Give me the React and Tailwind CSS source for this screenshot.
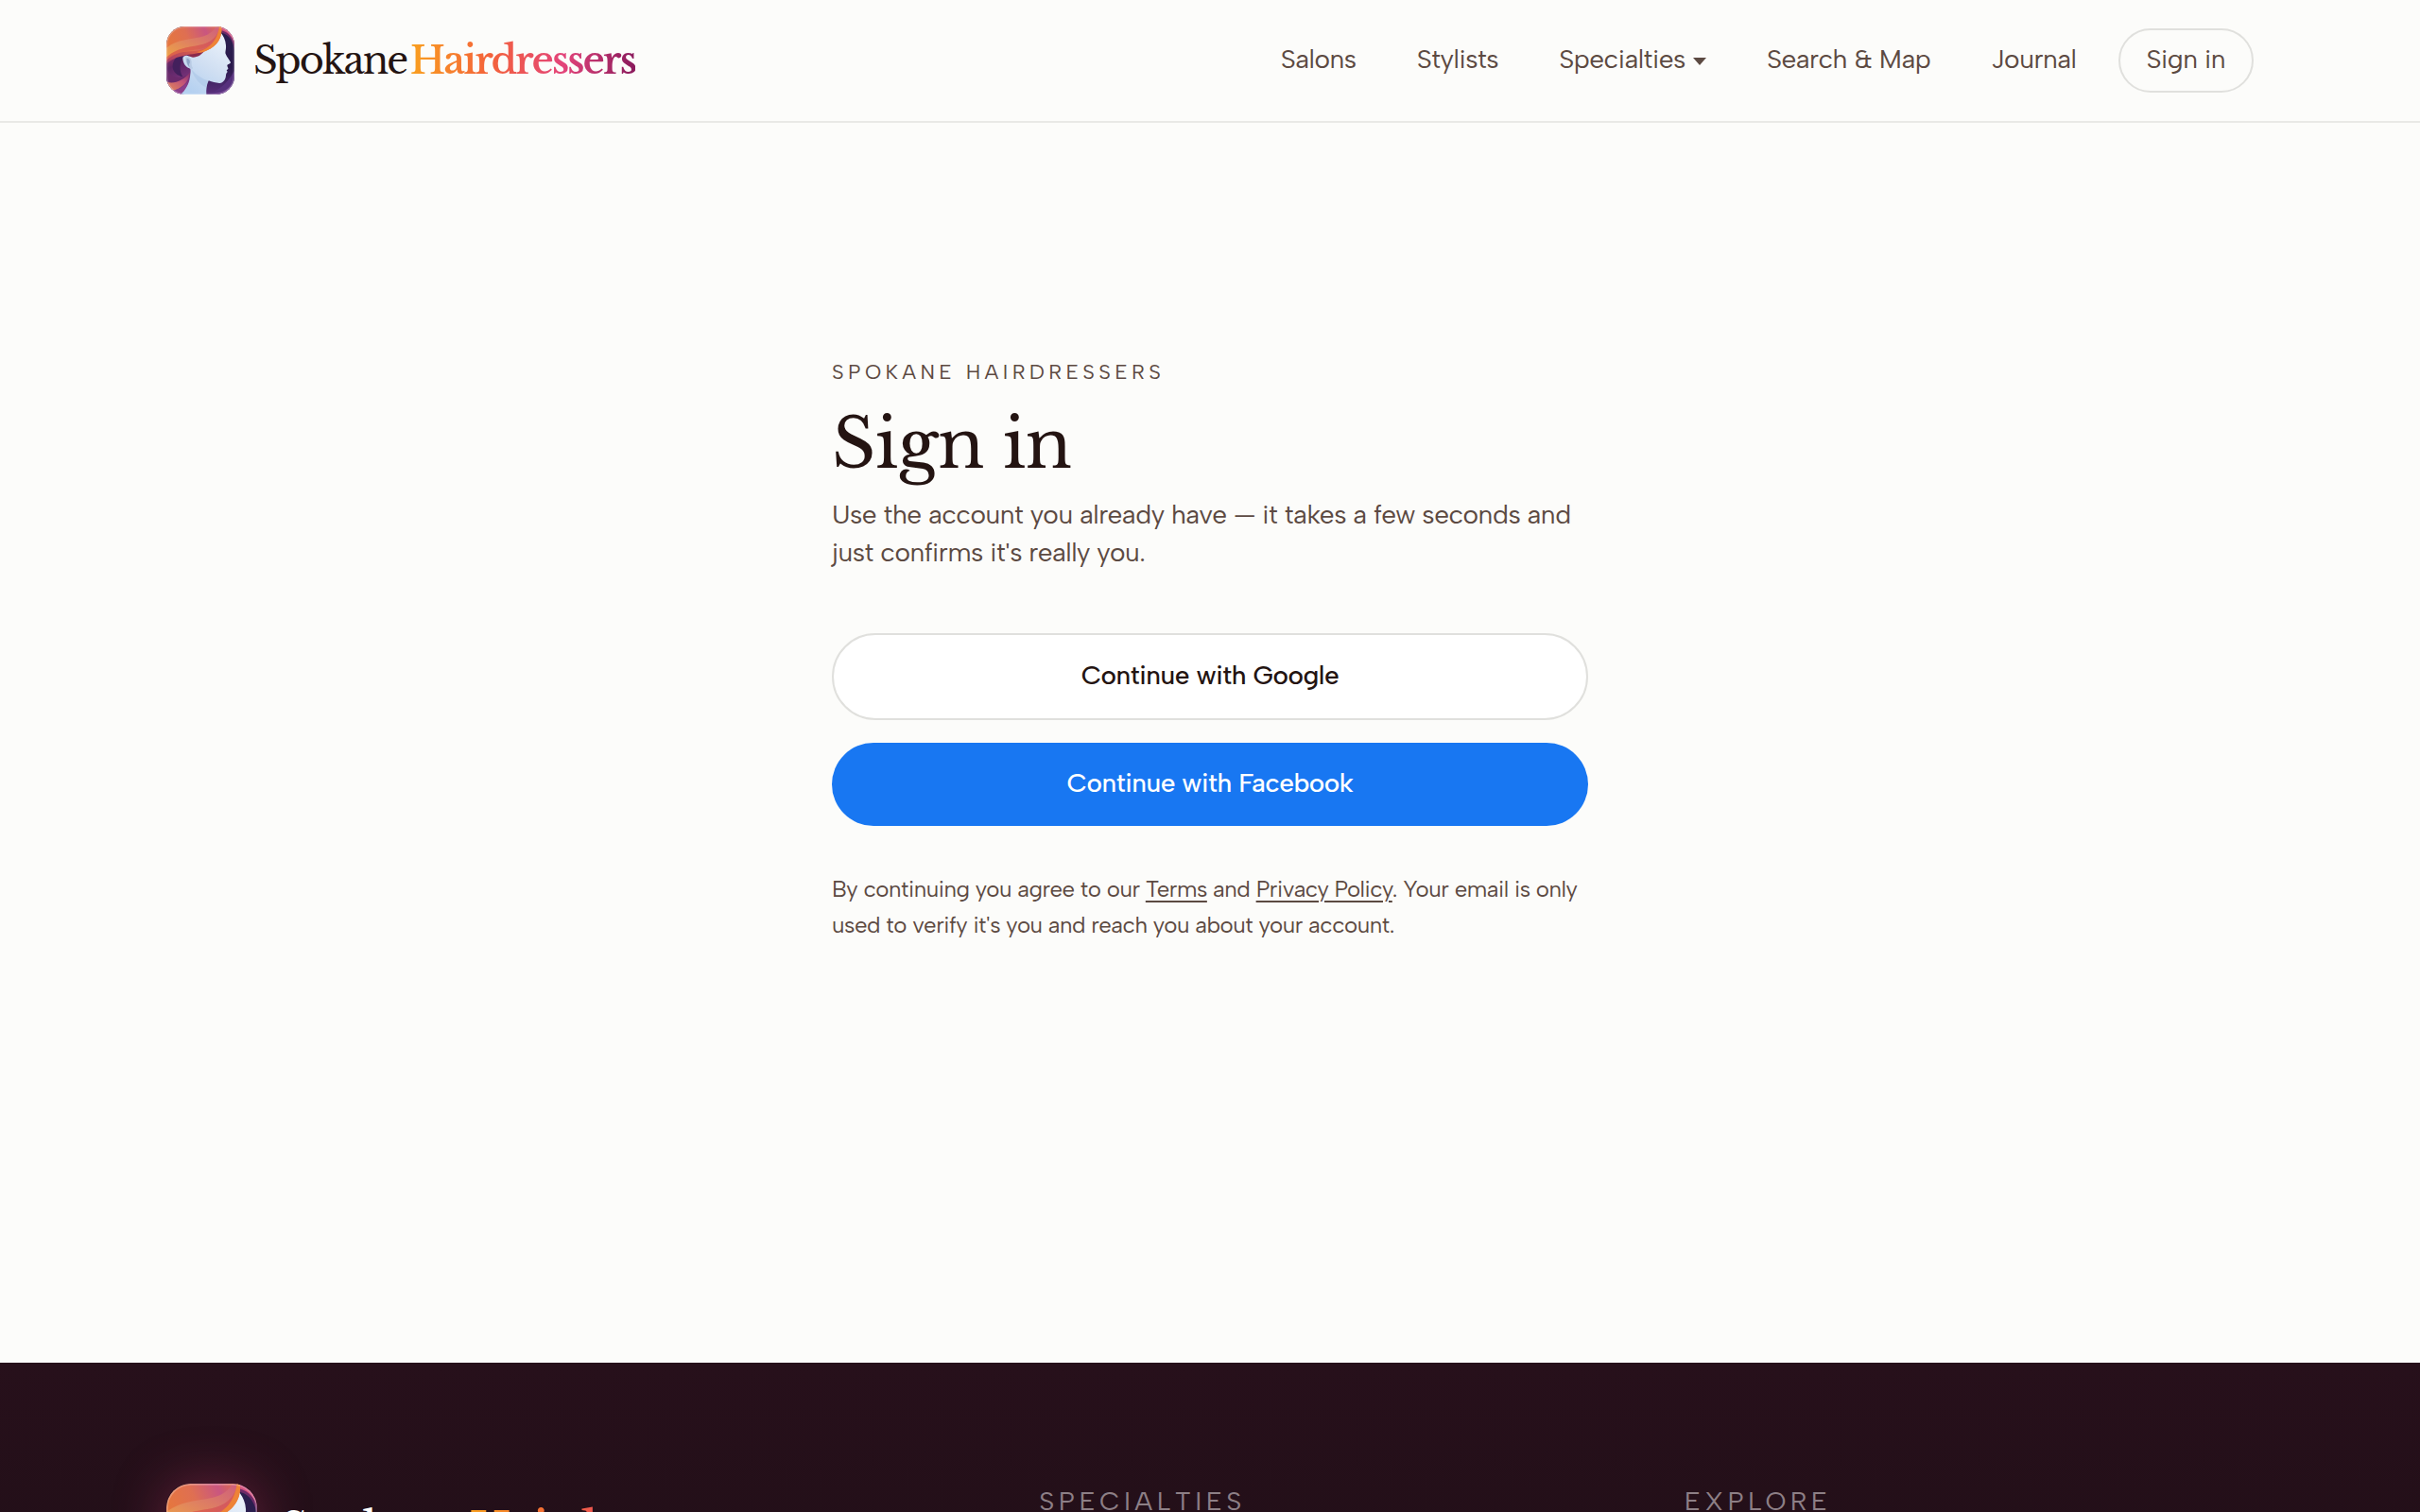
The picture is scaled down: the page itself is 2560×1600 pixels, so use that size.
import React, { useId } from "react";
import clsx from "clsx";

const navLinks = [
  { label: "Salons", href: "#salons" },
  { label: "Stylists", href: "#stylists" },
  { label: "Specialties", href: "#specialties", menu: true },
  { label: "Search & Map", href: "#search" },
  { label: "Journal", href: "#journal" },
];

function LogoMark({ className }) {
  const id = useId().replace(/[^a-zA-Z0-9]/g, "");
  const url = (name) => `url(#${name}${id})`;

  return (
    <svg viewBox="0 0 216 216" className={className} aria-hidden="true">
      <defs>
        <clipPath id={`clip${id}`}>
          <rect width="216" height="216" rx="58" />
        </clipPath>
        <linearGradient id={`bg${id}`} x1="0" y1="0" x2="0" y2="1">
          <stop offset="0" stopColor="#2a2150" />
          <stop offset="0.6" stopColor="#2b1a4c" />
          <stop offset="1" stopColor="#5a2f7c" />
        </linearGradient>
        <linearGradient id={`hair${id}`} x1="0" y1="0.3" x2="1" y2="0">
          <stop offset="0" stopColor="#e5763f" />
          <stop offset="0.35" stopColor="#df6f52" />
          <stop offset="0.7" stopColor="#c95680" />
          <stop offset="1" stopColor="#e0703f" />
        </linearGradient>
        <linearGradient id={`band${id}`} x1="0" y1="1" x2="1" y2="0">
          <stop offset="0" stopColor="#eda345" />
          <stop offset="0.45" stopColor="#e0835f" />
          <stop offset="1" stopColor="#cf5f7c" />
        </linearGradient>
        <linearGradient id={`front${id}`} x1="0" y1="1" x2="1" y2="0">
          <stop offset="0" stopColor="#a53a68" />
          <stop offset="0.5" stopColor="#dd6048" />
          <stop offset="1" stopColor="#f08a35" />
        </linearGradient>
        <linearGradient id={`back${id}`} x1="0" y1="0" x2="0.3" y2="1">
          <stop offset="0" stopColor="#a33567" />
          <stop offset="0.4" stopColor="#5a2465" />
          <stop offset="1" stopColor="#8a3c86" />
        </linearGradient>
        <linearGradient id={`lock${id}`} x1="0" y1="1" x2="1" y2="0">
          <stop offset="0" stopColor="#e58a55" />
          <stop offset="0.6" stopColor="#c0527a" />
          <stop offset="1" stopColor="#7a2c6c" />
        </linearGradient>
        <linearGradient id={`face${id}`} x1="0.8" y1="0" x2="0.3" y2="1">
          <stop offset="0" stopColor="#edf3fb" />
          <stop offset="0.55" stopColor="#d0dff2" />
          <stop offset="1" stopColor="#b4d0f0" />
        </linearGradient>
      </defs>
      <g clipPath={url("clip")}>
        <rect width="216" height="216" fill={url("bg")} />
        {/* hair behind the head */}
        <path d="M168 0H216V62C206 34 192 18 168 12Z" fill="#d4527f" />
        <path d="M176 20C200 26 212 48 216 76V54C210 34 196 18 174 12Z" fill="#6d2a68" />
        <path d="M120 216C150 212 190 190 216 140V216Z" fill="#56307c" />
        <path d="M126 216C160 214 196 204 216 176V190C200 206 180 214 160 216Z" fill="#6b3a8c" />
        <path d="M0 90C30 70 70 70 90 90L84 150C80 180 64 200 44 216H0Z" fill={url("back")} />
        <path d="M36 92C10 120 16 150 52 160C40 140 40 112 58 96Z" fill="#43205c" />
        <path d="M0 130C8 162 40 172 74 150C68 180 40 196 8 196L0 190Z" fill="#6b2a6c" />
        <path d="M0 176C26 184 54 172 76 144C72 178 44 202 14 204L0 200Z" fill={url("lock")} />
        <path d="M14 204C36 202 54 192 68 176C62 196 54 206 44 216H20Z" fill="#8c3f8c" />
        {/* head and neck */}
        <path
          d="M171 18C180 28 188 42 189 60C190 74 186 80 188 87C192 98 200 106 204 114C204 119 194 119 193 124C193 129 197 131 196 135L191 139L194 144C190 148 190 150 189 154C189 168 180 181 168 180C156 179 146 176 134 172C128 184 126 200 127 216H46C60 202 72 184 75 160C76 150 78 142 76 134C62 132 52 116 52 100C54 92 64 90 72 94L100 84C130 72 156 50 171 18Z"
          fill={url("face")}
        />
        <path d="M78 134C96 156 118 168 134 172C130 178 128 186 127 194C106 184 88 164 78 134Z" fill="#a9c4e6" opacity="0.55" />
        {/* ear */}
        <path d="M60 98C72 92 82 104 80 118C79 126 84 130 84 134C74 136 64 126 60 98Z" fill="#b9cbe4" />
        <path d="M64 102C72 100 76 108 74 116C70 120 72 126 76 130C68 126 64 116 64 102Z" fill="#8ea5c8" />
        <path d="M70 94L76 84L122 76C112 90 100 98 84 98Z" fill="#8a2a4c" />
        {/* swept hair over the crown */}
        <path d="M0 0H174C176 26 158 54 130 70C96 88 40 74 0 112Z" fill={url("hair")} />
        <path d="M2 104C24 82 56 80 92 78C130 74 160 46 166 14L174 4C178 36 160 64 128 76C92 94 46 82 0 118Z" fill={url("front")} />
        <path d="M0 68C36 40 76 42 108 34C132 28 148 16 156 2H168C166 24 148 48 118 56C84 66 40 62 0 98Z" fill={url("band")} />
        <path d="M0 98C40 62 84 66 118 56C148 48 166 24 168 4C172 30 152 58 120 68C84 78 40 72 0 108Z" fill="#d85b50" opacity="0.7" />
        <path d="M96 82C130 74 162 50 168 0H175C180 36 160 62 130 76C116 84 106 84 96 82Z" fill="#ee8337" />
      </g>
      <rect x="2" y="2" width="212" height="212" rx="56" fill="none" stroke="#fff" strokeOpacity="0.25" strokeWidth="4" />
    </svg>
  );
}

function Wordmark({ className }) {
  return (
    <span
      className={clsx(
        "font-['Libre_Baskerville','Liberation_Serif',serif] tracking-tighter whitespace-nowrap",
        className
      )}
    >
      Spokane{" "}
      <span className="-ml-1.5 bg-[linear-gradient(90deg,#f9a01f,#f4633a_35%,#e3447a_68%,#8a1a5c)] bg-clip-text font-semibold text-transparent">
        Hairdressers
      </span>
    </span>
  );
}

function Header() {
  return (
    <header className="border-b-2 border-[#e9e9e6]">
      <div className="mx-auto flex h-32 max-w-[2304px] items-center justify-between px-12">
        <a href="#home" className="flex items-center gap-5">
          <LogoMark className="size-18" />
          <Wordmark className="text-[40px] leading-14 text-[#241412]" />
        </a>
        <nav className="flex items-center text-[28px] leading-10 text-[#5c4a42]">
          <div className="flex items-center gap-16 pb-1">
            {navLinks.map((link) => (
              <a key={link.label} href={link.href} className="flex items-center gap-2 whitespace-nowrap">
                {link.label}
                {link.menu && (
                  <svg viewBox="0 0 14 8" className="mt-1.5 h-2 w-3.5" fill="currentColor" aria-hidden="true">
                    <path d="M0 0H14L7 8Z" />
                  </svg>
                )}
              </a>
            ))}
          </div>
          <a href="#signin" className="ml-11 rounded-full border-2 border-[#e0e0dd] px-7 pt-2.5 pb-3.5 whitespace-nowrap">
            Sign in
          </a>
        </nav>
      </div>
    </header>
  );
}

function SignIn() {
  return (
    <main className="min-h-[82vh] px-12 pt-60 pb-20">
      <div className="mx-auto max-w-[800px] text-[#5c4a42]">
        <p className="text-[22px] leading-12 tracking-[0.2em] uppercase">Spokane Hairdressers</p>
        <h1 className="font-['Libre_Baskerville','Liberation_Serif',serif] text-7xl leading-26 tracking-[-0.01em] text-[#241412]">
          Sign in
        </h1>
        <p className="mt-0.5 text-[28px] leading-10">
          Use the account you already have — it takes a few seconds and just confirms it's really you.
        </p>

        <div className="mt-16 flex flex-col gap-6 pt-0.5 text-[28px] leading-10 font-medium">
          <button type="button" className="rounded-full border-2 border-[#e0e0dd] bg-white pt-5.5 pb-6.5 text-[#241412]">
            Continue with Google
          </button>
          <button type="button" className="rounded-full bg-[#1877f2] pt-5.5 pb-6.5 text-white">
            Continue with Facebook
          </button>
        </div>

        <p className="mt-12 text-2xl leading-[38px]">
          By continuing you agree to our{" "}
          <a href="#terms" className="underline decoration-2 underline-offset-4">Terms</a> and{" "}
          <a href="#privacy" className="underline decoration-2 underline-offset-4">Privacy Policy</a>. Your email is
          only used to verify it's you and reach you about your account.
        </p>
      </div>
    </main>
  );
}

function Footer() {
  return (
    <footer className="bg-linear-to-b from-[#27101b] to-[#220f18]">
      <div className="mx-auto grid max-w-[2304px] grid-cols-[1.4fr_1fr_1fr] gap-20 px-12 pt-32">
        <a href="#home" className="flex items-center gap-6">
          <LogoMark className="size-24 shrink-0 rounded-3xl shadow-[0_0_56px_rgba(224,64,122,0.35)]" />
          <Wordmark className="text-5xl leading-16 text-white" />
        </a>
        <h2 className="text-[28px] leading-9 tracking-[0.16em] text-[#8d7f86] uppercase">Specialties</h2>
        <h2 className="text-[28px] leading-9 tracking-[0.16em] text-[#8d7f86] uppercase">Explore</h2>
      </div>
    </footer>
  );
}

export default function App() {
  return (
    <div className="h-screen overflow-x-hidden overflow-y-auto bg-[#fcfcfa] font-['Albert_Sans','Lato',sans-serif] tracking-[-0.03em] [scrollbar-width:none]">
      <Header />
      <SignIn />
      <Footer />
    </div>
  );
}
